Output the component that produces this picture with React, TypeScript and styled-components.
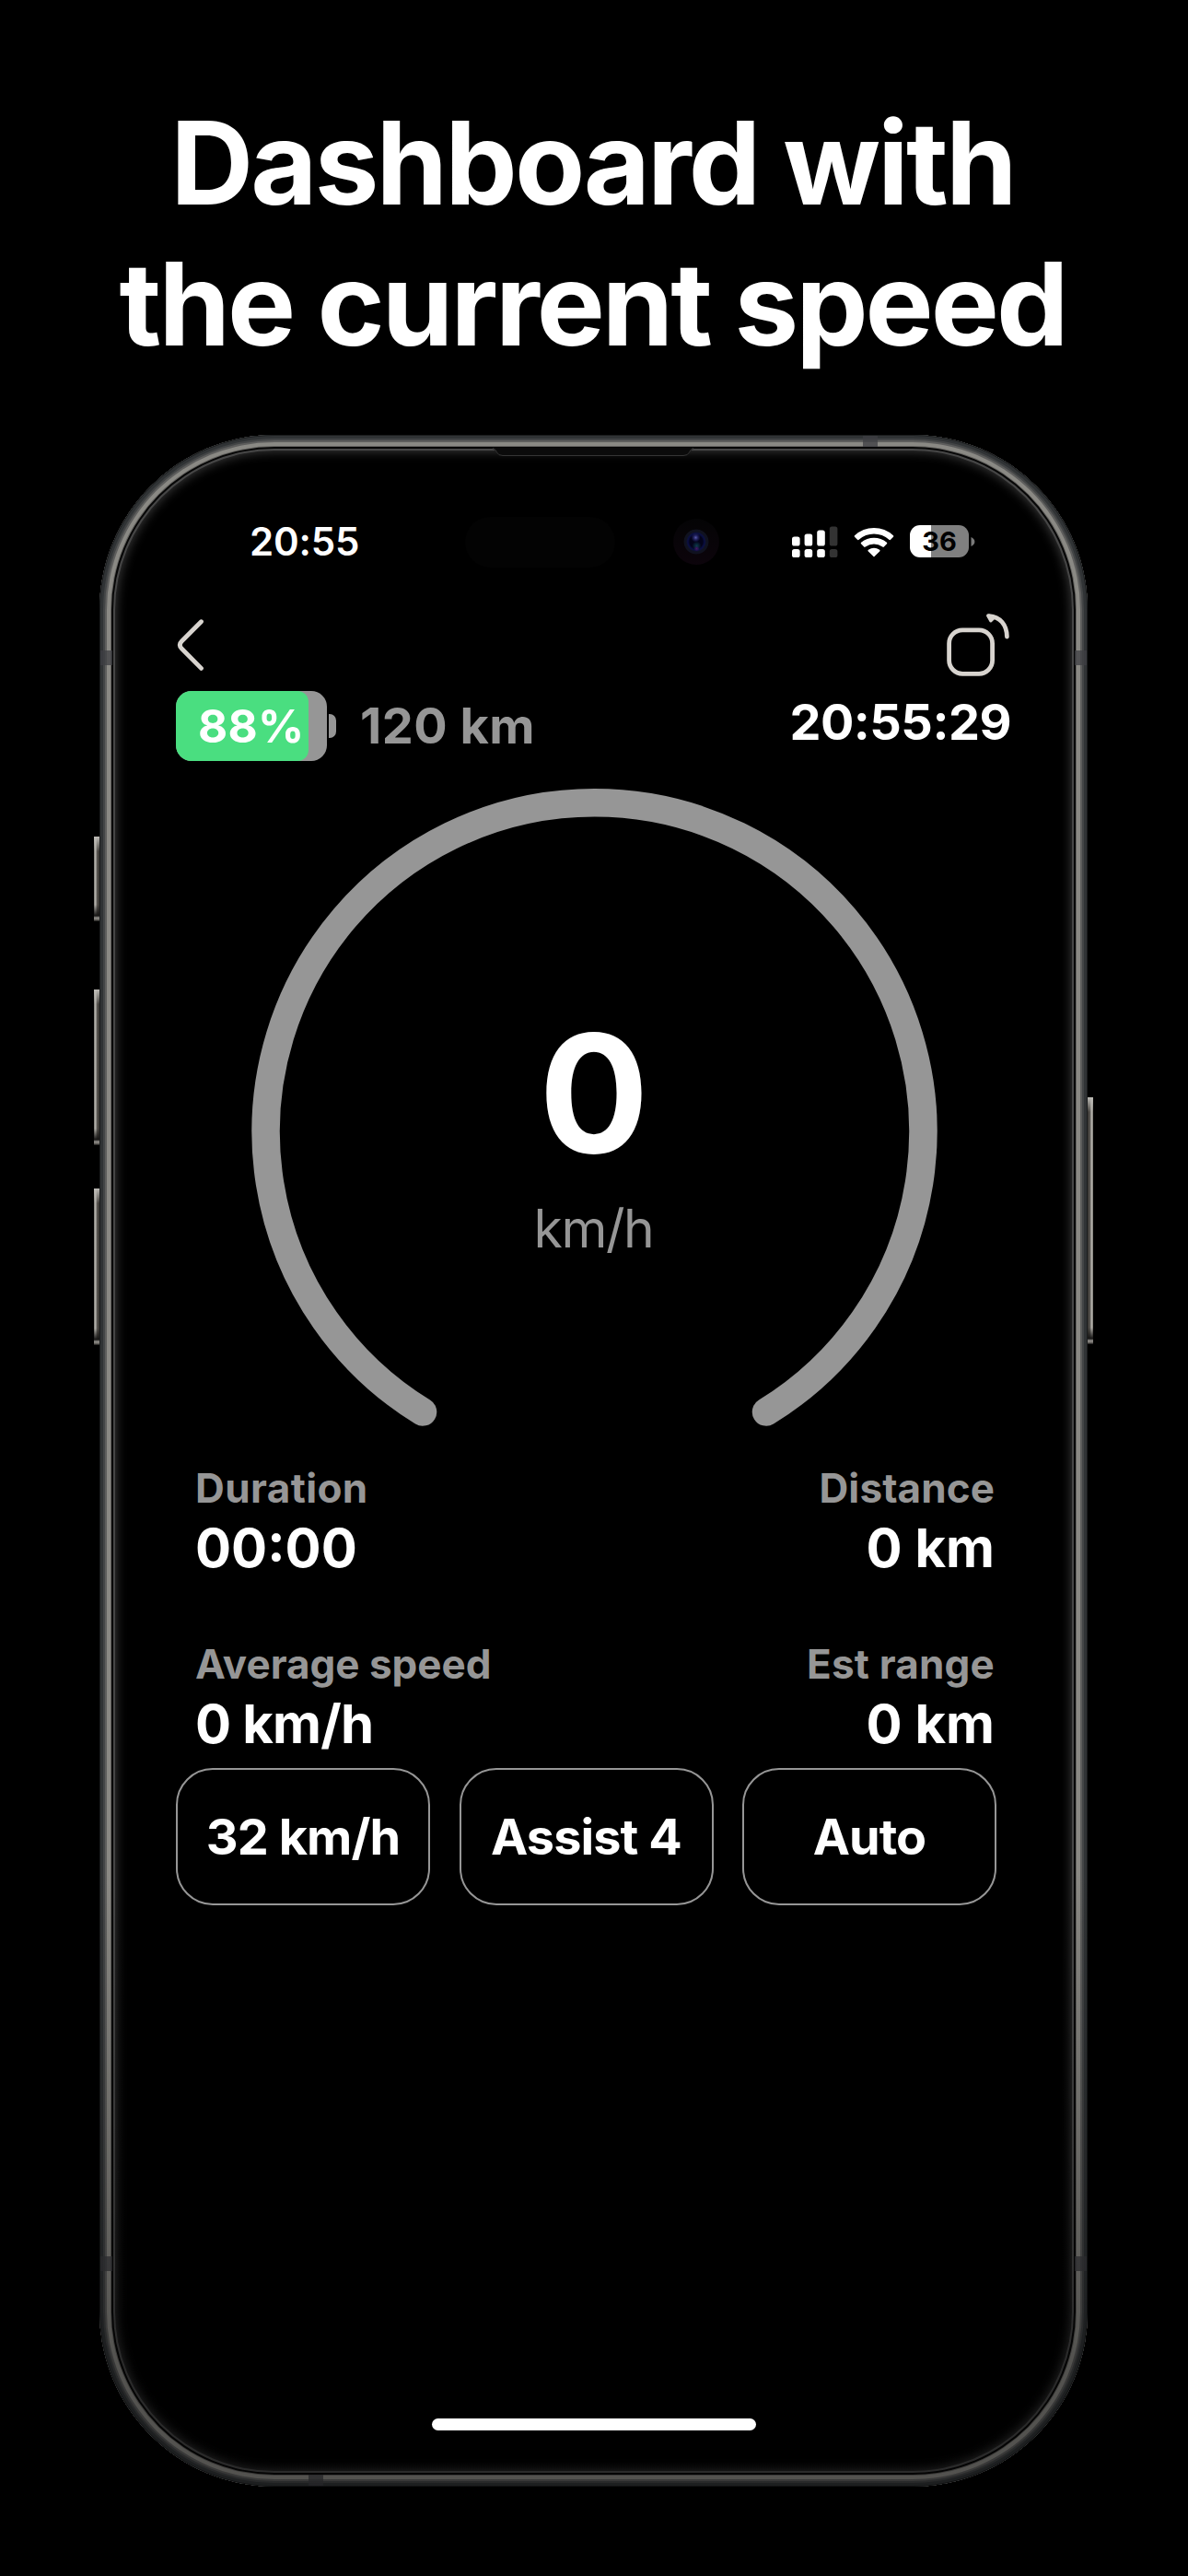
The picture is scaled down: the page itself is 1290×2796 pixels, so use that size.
import React from "react";
import styled, { createGlobalStyle } from "styled-components";

const stats = [
  { label: "Duration", value: "00:00", labelGap: 0.4, valueGap: 0 },
  { label: "Distance", value: "0 km", right: true, labelGap: 0.1, valueGap: 0 },
  { label: "Average speed", value: "0 km/h", labelGap: 0, valueGap: -0.8 },
  { label: "Est range", value: "0 km", right: true, labelGap: 0.2, valueGap: 0 },
];

const bars = [10, 13, 17, 21];

function StatusIcons() {
  return (
    <Icons>
      <svg width="50" height="36" viewBox="0 0 50 36">
        {bars.map((h, i) => (
          <g key={h} fill={i === 3 ? "#333333" : "#ffffff"}>
            <rect x={i * 13.6} y={22.5 - h} width="8.6" height={h} rx="2.6" />
            <rect x={i * 13.6} y="26" width="8.6" height="9" rx="2.6" />
          </g>
        ))}
      </svg>
      <svg width="44" height="36" viewBox="0 0 44 36" fill="#ffffff">
        <path d="M22 34.6 L15.6 28.2 Q15 27.4 15.9 26.8 Q22 22.6 28.1 26.8 Q29 27.4 28.4 28.2 Z" />
        <path d="M11.2 23.6 L8 20.3 Q7.3 19.5 8.1 18.8 Q14.3 13.8 22 13.8 T35.9 18.8 Q36.7 19.5 36 20.3 L32.8 23.6 Q32.1 24.2 31.3 23.6 Q26.8 20.4 22 20.4 T12.7 23.6 Q11.9 24.2 11.2 23.6 Z" />
        <path d="M4 15.8 L1 12.8 Q0.2 12 1 11.2 Q10 3 22 3 T43 11.2 Q43.8 12 43 12.8 L40 15.8 Q39.2 16.5 38.4 15.8 Q31.3 9.6 22 9.6 T5.6 15.8 Q4.8 16.5 4 15.8 Z" />
      </svg>
      <PhoneBattery>
        <span>36</span>
      </PhoneBattery>
      <svg width="5" height="12" viewBox="0 0 5 12">
        <path d="M0.5 1 Q4.4 3 4.4 6 Q4.4 9 0.5 11 Z" fill="#7a7a7a" />
      </svg>
    </Icons>
  );
}

function Gauge() {
  return (
    <GaugeBox>
      <svg width="746" height="694" viewBox="0 0 746 694" fill="none">
        <path
          d="M187 676.5 A356.9 356.9 0 1 1 560 676.5"
          stroke="#969696"
          strokeWidth="30.5"
          strokeLinecap="round"
        />
      </svg>
      <Speed>
        <strong>0</strong>
        <span>km/h</span>
      </Speed>
    </GaugeBox>
  );
}

function App() {
  return (
    <Page>
      <GlobalStyle />
      <Title>
        <TitleLine $gap={-2.85}>Dashboard with</TitleLine>
        <TitleLine $gap={-3}>the current speed</TitleLine>
      </Title>
      <Phone>
        <SideButton $top={436} $height={92} />
        <SideButton $top={602} $height={169} />
        <SideButton $top={818} $height={170} />
        <SideButton $right $top={719} $height={268} />
        <Band $x={829} $y={1} $w={16} $h={12} />
        <Band $x={1} $y={234} $w={13} $h={16} />
        <Band $x={1059} $y={234} $w={13} $h={16} />
        <Band $x={1} $y={1977} $w={13} $h={16} />
        <Band $x={1059} $y={1977} $w={13} $h={16} />
        <Band $x={227} $y={2214} $w={16} $h={12} />
        <Earpiece viewBox="0 0 222 10">
          <path d="M0 0 H222 Q218 1 216 5 Q214 8.5 209 8.5 H13 Q8 8.5 6 5 Q4 1 0 0 Z" fill="#0b0b0b" />
          <path d="M2 0.5 Q5 1 6.5 5 Q8 8.5 13 8.5 H209 Q214 8.5 215.5 5 Q217 1 220 0.5" fill="none" stroke="#353535" />
        </Earpiece>
        <Screen>
          <StatusBar>
            <StatusTime>20:55</StatusTime>
            <Island />
            <Camera />
            <StatusIcons />
          </StatusBar>
          <NavBar>
            <svg width="32" height="78" viewBox="0 0 32 78" fill="none">
              <path
                d="M27.5 14.8 L6.3 36 Q2.3 40 6.3 44 L27.5 65.4"
                stroke="#d8d4cf"
                strokeWidth="4.8"
                strokeLinecap="round"
              />
            </svg>
            <svg width="70" height="78" viewBox="0 0 70 78" fill="none" stroke="#d8d4cf">
              <rect x="3.6" y="23.9" width="47" height="47.4" rx="14.5" strokeWidth="4.8" />
              <path d="M66.4 31 C66.2 18 59 9.5 47 8.6" strokeWidth="4.8" strokeLinecap="round" />
              <path d="M45.8 8.2 L48.8 13.8 L52.6 10 Z" fill="#d8d4cf" strokeWidth="3.4" strokeLinejoin="round" />
            </svg>
          </NavBar>
          <InfoRow>
            <Battery>
              <Charge>88%</Charge>
            </Battery>
            <BatteryTip />
            <Range>120 km</Range>
            <Clock>20:55:29</Clock>
          </InfoRow>
          <Gauge />
          <Stats>
            {stats.map((s) => (
              <Stat key={s.label} $right={s.right}>
                <StatLabel $gap={s.labelGap}>{s.label}</StatLabel>
                <StatValue $gap={s.valueGap}>{s.value}</StatValue>
              </Stat>
            ))}
          </Stats>
          <Modes>
            <Mode>32 km/h</Mode>
            <Mode>Assist 4</Mode>
            <Mode>Auto</Mode>
          </Modes>
          <HomeIndicator />
        </Screen>
      </Phone>
    </Page>
  );
}

export default App;

const GlobalStyle = createGlobalStyle`
  * {
    box-sizing: border-box;
  }

  body {
    margin: 0;
    background: #000000;
    font-family: Inter, "Liberation Sans", sans-serif;
    color: #ffffff;
  }

  svg {
    display: block;
    flex: none;
  }
`;

const Page = styled.div`
  width: 1290px;
  height: 2796px;
  padding-top: 100px;
  display: flex;
  flex-direction: column;
  align-items: center;
  overflow: hidden;
  background: #000000;
`;

const Title = styled.h1`
  margin: 0;
  padding-right: 3px;
  font-size: 124.5px;
  font-weight: 700;
  line-height: 153px;
  text-align: center;
`;

const TitleLine = styled.div<{ $gap: number }>`
  letter-spacing: ${(p) => p.$gap}px;
  white-space: nowrap;
`;

// metal frame: hard rings from the outside in, then a soft glow on the glass
const Phone = styled.div`
  position: relative;
  width: 1073px;
  height: 2227px;
  margin-top: 66px;
  margin-left: -1px;
  border-radius: 190px;
  background: #000000;
  box-shadow:
    inset 0 0 0 1px #1b1d1e,
    inset 0 0 0 4px #303335,
    inset 0 0 0 6px #434546,
    inset 0 0 0 8px #5e5e5d,
    inset 0 0 0 12px #8a8984,
    inset 0 0 0 13px #63625f,
    inset 0 0 0 15px #060606,
    inset 0 0 0 17px #464646,
    inset 0 0 12px 18px #3a3a3a;

  &::after {
    content: "";
    position: absolute;
    inset: 0;
    border-radius: 190px;
    background: linear-gradient(rgba(0, 0, 0, 0) 70%, rgba(0, 0, 0, 0.4) 94%);
  }
`;

const SideButton = styled.div<{ $top: number; $height: number; $right?: boolean }>`
  position: absolute;
  top: ${(p) => p.$top}px;
  ${(p) => (p.$right ? "right: -6px;" : "left: -6px;")}
  width: 6px;
  height: ${(p) => p.$height}px;
  background:
    linear-gradient(
      #bdbbb6 0,
      rgba(190, 188, 183, 0) 16px,
      rgba(0, 0, 0, 0) calc(100% - 18px),
      #161514 calc(100% - 6px),
      #8d8b87 calc(100% - 4px),
      #77746f calc(100% - 2px),
      #111111 100%
    ),
    linear-gradient(${(p) => (p.$right ? "to left" : "to right")}, #77756f 0, #c2c0ba 2px, #5f5c57 3px, #36332f 6px);
`;

const Band = styled.div<{ $x: number; $y: number; $w: number; $h: number }>`
  position: absolute;
  left: ${(p) => p.$x}px;
  top: ${(p) => p.$y}px;
  width: ${(p) => p.$w}px;
  height: ${(p) => p.$h}px;
  background: rgba(62, 63, 67, 0.75);
`;

const Earpiece = styled.svg`
  position: absolute;
  left: 425px;
  top: 14px;
  width: 222px;
  height: 10px;
`;

const Screen = styled.main`
  position: relative;
  z-index: 1;
  height: 100%;
  padding: 86px 83px 61px;
  display: flex;
  flex-direction: column;
`;

const StatusBar = styled.header`
  height: 60px;
  padding: 0 39px 0 80px;
  display: flex;
  align-items: center;
`;

const StatusTime = styled.div`
  width: 234px;
  font-size: 42px;
  font-weight: 600;
  line-height: 60px;
  letter-spacing: -0.2px;
`;

const Island = styled.div`
  width: 163px;
  height: 55px;
  border-radius: 28px;
  background: #030303;
`;

const Camera = styled.div`
  width: 50px;
  height: 50px;
  margin-left: 63px;
  border-radius: 50%;
  background:
    radial-gradient(circle at 24.5px 20.5px, #5558a8 0, rgba(50, 50, 130, 0.6) 2.5px, transparent 5px),
    radial-gradient(circle at 25.5px 32.5px, #471568 0, transparent 3px),
    radial-gradient(circle at 25.5px 29.5px, #0c3b4c 0, transparent 5px),
    radial-gradient(circle at 25px 25px, #03031a 7px, #0a0f45 9px, #10121f 11px, #10121f 13px, transparent 13.8px),
    linear-gradient(#040405, #0c040b);
`;

const Icons = styled.div`
  margin-left: auto;
  padding-bottom: 1px;
  display: flex;
  align-items: center;

  svg + svg {
    margin-left: 17px;
  }
`;

const PhoneBattery = styled.div`
  width: 64px;
  height: 35px;
  margin: 0 2px 0 17px;
  border-radius: 11px;
  background: linear-gradient(to right, #ffffff 23.5px, #808080 23.5px);
  color: #000000;
  font-size: 29px;
  font-weight: 700;
  line-height: 35px;
  text-align: center;
`;

const NavBar = styled.nav`
  height: 78px;
  margin-top: 42px;
  padding-right: 1px;
  display: flex;
  justify-content: space-between;
`;

const InfoRow = styled.section`
  height: 76px;
  margin-top: 12px;
  display: flex;
  align-items: center;
  font-weight: 700;
`;

const Battery = styled.div`
  width: 164px;
  height: 76px;
  border-radius: 17px;
  overflow: hidden;
  background: #969696;
`;

const Charge = styled.div`
  width: 88%;
  height: 100%;
  padding-left: 24px;
  border-radius: 0 12px 12px 0;
  background: #4ade80;
  font-size: 49.5px;
  line-height: 76px;
  letter-spacing: 0.3px;
`;

const BatteryTip = styled.div`
  width: 8px;
  height: 26px;
  margin-left: 2px;
  border-radius: 0 7px 7px 0;
  background: #969696;
`;

const Range = styled.div`
  margin-left: 26px;
  color: #969696;
  font-size: 54px;
  line-height: 76px;
  letter-spacing: 0.5px;
`;

const Clock = styled.time`
  margin-left: auto;
  padding-bottom: 8px;
  font-size: 54px;
  line-height: 68px;
  letter-spacing: -0.5px;
`;

const GaugeBox = styled.section`
  margin: 30px 0 0 81px;
  width: 746px;
  display: grid;

  > * {
    grid-area: 1 / 1;
  }
`;

const Speed = styled.div`
  padding-top: 241px;
  display: flex;
  flex-direction: column;
  align-items: center;

  strong {
    font-size: 177px;
    font-weight: 700;
    line-height: 180px;
  }

  span {
    margin-top: 22px;
    padding-right: 1px;
    color: #969696;
    font-size: 57px;
    line-height: 70px;
    letter-spacing: -1.4px;
  }
`;

const Stats = styled.section`
  margin: 35px 0 0;
  padding: 0 18px 0 21px;
  display: grid;
  grid-template-columns: 1fr 1fr;
  row-gap: 61px;
`;

const Stat = styled.div<{ $right?: boolean }>`
  text-align: ${(p) => (p.$right ? "right" : "left")};
  white-space: nowrap;
  font-weight: 700;
`;

const StatLabel = styled.div<{ $gap: number }>`
  color: #969696;
  font-size: 44px;
  line-height: 60px;
  letter-spacing: ${(p) => p.$gap}px;
`;

const StatValue = styled.div<{ $gap: number }>`
  font-size: 58px;
  line-height: 70px;
  letter-spacing: ${(p) => p.$gap}px;
`;

const Modes = styled.div`
  margin-top: 13px;
  padding-right: 16px;
  display: grid;
  grid-template-columns: repeat(3, 276px);
  justify-content: space-between;
`;

const Mode = styled.button`
  height: 149px;
  padding: 0;
  border: 2px solid #969696;
  border-radius: 40px;
  background: transparent;
  color: #ffffff;
  font: 700 54px Inter, "Liberation Sans", sans-serif;
  letter-spacing: -0.9px;
`;

const HomeIndicator = styled.div`
  width: 352px;
  height: 13px;
  margin: auto auto 0;
  border-radius: 7px;
  background: #ffffff;
`;
